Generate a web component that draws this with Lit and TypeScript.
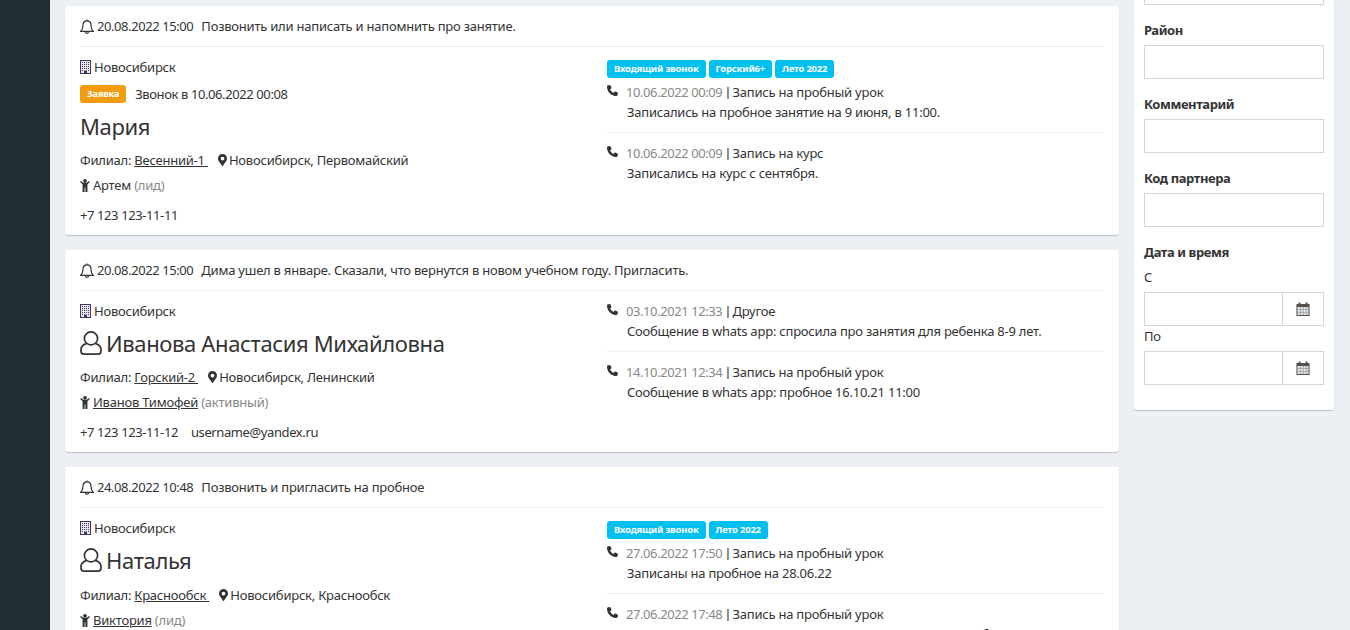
import { LitElement, html, css } from "lit";
import { customElement } from "lit/decorators.js";

const bell = html`<svg class="bell" viewBox="0 0 14 15" fill="none" stroke="currentColor" stroke-width="1.200"><path d="M7 1.800C4.600 1.800 3 3.700 3 6.200c0 3-.7 4.600-2.300 6.100h12.600C11.700 10.800 11 9.200 11 6.200c0-2.500-1.600-4.400-4-4.400z"/><path d="M7 .4v1.400M5.400 12.500c0 1 .7 1.800 1.600 1.800s1.600-.8 1.600-1.800"/></svg>`;
const building = html`<svg class="bld" viewBox="0 0 11 14"><path fill="#ece8f2" d="M0 0h11v14H0z"/><path fill-rule="evenodd" fill="#43365a" d="M0 0h11v14H0zM1 1v12h9V1z"/><path fill="#43365a" d="M2 2h1v1H2zM4 2h1v1H4zM6 2h1v1H6zM8 2h1v1H8zM2 4h1v1H2zM4 4h1v1H4zM6 4h1v1H6zM8 4h1v1H8zM2 6h1v1H2zM4 6h1v1H4zM6 6h1v1H6zM8 6h1v1H8zM2 8h1v1H2zM4 8h1v1H4zM6 8h1v1H6zM8 8h1v1H8zM2 10h1v1H2zM8 10h1v1H8zM4 10.500h3V14H4z"/></svg>`;
const pin = html`<svg class="ic pin" viewBox="0 0 384 512"><path d="M172.300 501.700C27 291 0 269.400 0 192 0 86 86 0 192 0s192 86 192 192c0 77.400-27 99-172.300 309.700-9.500 13.800-29.900 13.800-39.400 0zM192 272a80 80 0 1 0 0-160 80 80 0 0 0 0 160z"/></svg>`;
const child = html`<svg class="ic child" viewBox="0 0 12 16"><circle cx="6" cy="2.300" r="2.300"/><path d="M0 3.600 1 2.400l3 2.300h4l3-2.300 1 1.200-3 3V16H6.500v-5.500h-1V16H3V6.600z"/></svg>`;
const phone = html`<svg class="ic phone" viewBox="0 0 512 512"><path d="M164.900 24.600c-7.700-18.600-28-28.500-47.400-23.200l-88 24C12.100 30.200 0 46 0 64c0 247.400 200.600 448 448 448 18 0 33.800-12.100 38.600-29.500l24-88c5.300-19.400-4.600-39.700-23.200-47.400l-96-40c-16.300-6.800-35.200-2.100-46.300 11.600L304.700 368C234.300 334.700 177.300 277.700 144 207.300l49.300-40.400c13.700-11.200 18.400-30 11.600-46.300l-40-96z"/></svg>`;
const user = html`<svg class="user" viewBox="0 0 22 24" fill="none" stroke="currentColor" stroke-width="1.700"><ellipse cx="11" cy="7.400" rx="6.600" ry="6.500"/><path d="M6.500 12.600C3 13.600 1 15.800 1 18.800v1.200c0 1.900 1.300 3.100 3 3.100h14c1.700 0 3-1.200 3-3.100v-1.200c0-3-2-5.200-5.500-6.200"/></svg>`;
const cal = html`<svg class="calic" viewBox="0 0 14 14"><path fill="#dfe3ea" d="M.5 2h13v12H.5z"/><path fill="#55504c" d="M.5 2h2V.500h2V2h5V.500h2V2h2v3H.5zM.5 5h1v9h-1zM12.500 5h1v9h-1zM.5 13h13v1H.5z"/><path fill="#8a8a8a" d="M1 7.500h12v.6H1zM1 10.200h12v.6H1zM4 5h.6v8H4zM6.900 5h.6v8h-.6zM9.800 5h.6v8h-.6z"/></svg>`;

type Note = { date: string; type: string; text: string };
type Card = {
  reminder: string; remText: string; tags: string[]; claim?: string; name: string; icon: boolean;
  branch: string; loc: string; kid: string; kidLink: boolean; status: string; contacts: string[]; notes: Note[];
};

const cards: Card[] = [
  { reminder: "20.08.2022 15:00", remText: "Позвонить или написать и напомнить про занятие.",
    tags: ["Входящий звонок", "Горский6+", "Лето 2022"], claim: "Звонок в 10.06.2022 00:08", name: "Мария", icon: false,
    branch: "Весенний-1", loc: "Новосибирск, Первомайский", kid: "Артем", kidLink: false, status: "(лид)", contacts: ["+7 123 123-11-11"],
    notes: [
      { date: "10.06.2022 00:09", type: "Запись на пробный урок", text: "Записались на пробное занятие на 9 июня, в 11:00." },
      { date: "10.06.2022 00:09", type: "Запись на курс", text: "Записались на курс с сентября." },
    ] },
  { reminder: "20.08.2022 15:00", remText: "Дима ушел в январе. Сказали, что вернутся в новом учебном году. Пригласить.",
    tags: [], name: "Иванова Анастасия Михайловна", icon: true,
    branch: "Горский-2", loc: "Новосибирск, Ленинский", kid: "Иванов Тимофей", kidLink: true, status: "(активный)", contacts: ["+7 123 123-11-12", "username@yandex.ru"],
    notes: [
      { date: "03.10.2021 12:33", type: "Другое", text: "Сообщение в whats app: спросила про занятия для ребенка 8-9 лет." },
      { date: "14.10.2021 12:34", type: "Запись на пробный урок", text: "Сообщение в whats app: пробное 16.10.21 11:00" },
    ] },
  { reminder: "24.08.2022 10:48", remText: "Позвонить и пригласить на пробное",
    tags: ["Входящий звонок", "Лето 2022"], name: "Наталья", icon: true,
    branch: "Краснообск", loc: "Новосибирск, Краснообск", kid: "Виктория", kidLink: true, status: "(лид)", contacts: [],
    notes: [
      { date: "27.06.2022 17:50", type: "Запись на пробный урок", text: "Записаны на пробное на 28.06.22" },
      { date: "27.06.2022 17:48", type: "Запись на пробный урок", text: "Записаны на занятие 27.06.22 в 16:00, подтвердили, на работе" },
    ] },
];

@customElement("app-root")
export class AppRoot extends LitElement {
  static styles = css`
    :host { display: block; height: 630px; overflow: hidden; background: #ecf0f5; font: 13px/20px "Noto Sans", sans-serif; color: #333; letter-spacing: -0.23px; }
    .page { display: flex; height: 630px; overflow: hidden; }
    .side { width: 50px; background: #222d32; flex: none; }
    .main { width: 1054px; margin-left: 15px; padding-top: 6px; flex: none; }
    .card { background: #fff; border-radius: 3px; box-shadow: 0 1px 1px rgba(0,0,0,.2); padding: 10px 15px 10px; margin-bottom: 15px; }
    .card:nth-child(3) h3 { margin-bottom: 11px; }
    .rem { display: flex; align-items: center; height: 20px; padding-bottom: 10px; border-bottom: 1px solid #eee; margin-bottom: 10px; }
    .rem .when { margin: 0 8px 0 3px; letter-spacing: -0.42px; }
    .cols { display: flex; }
    .left { width: 527px; flex: none; }
    .right { flex: 1; }
    .ic { fill: currentColor; flex: none; display: inline-block; vertical-align: -2px; }
    .bell { width: 14px; height: 15px; flex: none; }
    .bld { width: 11px; height: 14px; margin-right: 3px; display: inline-block; vertical-align: -2px; }
    .pin { width: 9px; height: 12px; margin-right: 2px; vertical-align: -1px; }
    .child { width: 10px; height: 13px; margin-right: 3px; }
    .phone { width: 11px; height: 11px; position: relative; top: -2px; }
    .city { height: 20px; margin-bottom: 7px; }
    .claimrow { display: flex; align-items: center; height: 20px; margin-bottom: 7px; letter-spacing: -0.4px; }
    .lbl { background: #f39c12; color: #fff; font-size: 9.500px; font-weight: 700; line-height: 18px; padding: 0 7px; border-radius: 3px; margin-right: 9px; letter-spacing: -0.3px; }
    h3 { font-size: 22px; font-weight: 400; line-height: 26px; margin: 8px 0 10px; height: 28px; display: flex; align-items: center; gap: 4px; letter-spacing: -0.36px; }
    .user { width: 22px; height: 24px; flex: none; }
    .line { height: 20px; margin-bottom: 5px; }
    a { color: #333; text-decoration: underline; }
    .mut { color: #888; }
    .gap { margin-left: 10px; }
    .cts { margin-top: 10px; display: flex; gap: 13px; height: 20px; letter-spacing: -0.4px; }
    .tags { display: flex; gap: 3px; height: 18px; margin-top: 3px; margin-bottom: 4px; }
    .tag { background: #00c0ef; color: #fff; font-size: 9.500px; font-weight: 700; line-height: 18px; padding: 0 7px; border-radius: 3px; letter-spacing: -0.22px; }
    .note { padding-bottom: 10px; }
    .note + .note { border-top: 1px solid #eee; padding-top: 10px; }
    .nh { display: flex; align-items: center; height: 20px; }
    .nh .d { color: #888; margin-left: 8px; letter-spacing: -0.42px; }
    .nh .sep { font-family: "Liberation Sans", sans-serif; margin: 0 3px 0 4px; }
    .nb { padding-left: 20px; height: 20px; white-space: nowrap; }
    .filter { width: 200px; margin-left: 15px; flex: none; background: #fff; border-radius: 3px; box-shadow: 0 1px 1px rgba(0,0,0,.2); height: 410px; padding: 0 10px; box-sizing: border-box; }
    .f0 { height: 5px; border: 1px solid #d2d6de; border-top: none; box-sizing: border-box; margin-bottom: 15px; }
    .fl { font-weight: 700; height: 20px; margin-bottom: 5px; letter-spacing: -0.42px; }
    .inp { height: 34px; border: 1px solid #d2d6de; box-sizing: border-box; margin-bottom: 15px; }
    .sub { height: 20px; margin-bottom: 5px; }
    .grp { display: flex; height: 34px; border: 1px solid #d2d6de; box-sizing: border-box; }
    .grp div { flex: 1; }
    .grp span { width: 40px; border-left: 1px solid #d2d6de; display: flex; align-items: center; justify-content: center; }
    .calic { width: 14px; height: 14px; }
    .sub2 { height: 20px; margin-top: 0; margin-bottom: 5px; }
  `;

  card(c: Card) {
    return html`<div class="card">
      <div class="rem">${bell}<span class="when">${c.reminder}</span><span>${c.remText}</span></div>
      <div class="cols">
        <div class="left">
          <div class="city">${building}Новосибирск</div>
          ${c.claim ? html`<div class="claimrow"><span class="lbl">Заявка</span>${c.claim}</div>` : ""}
          <h3>${c.icon ? user : ""}${c.name}</h3>
          <div class="line">Филиал: <a href="#">${c.branch} </a><span class="gap">${pin}${c.loc}</span></div>
          <div class="line">${child}${c.kidLink ? html`<a href="#">${c.kid}</a>` : c.kid} <span class="mut">${c.status}</span></div>
          ${c.contacts.length ? html`<div class="cts">${c.contacts.map((x) => html`<span>${x}</span>`)}</div>` : ""}
        </div>
        <div class="right">
          ${c.tags.length ? html`<div class="tags">${c.tags.map((t) => html`<span class="tag">${t}</span>`)}</div>` : ""}
          ${c.notes.map((n) => html`<div class="note">
            <div class="nh">${phone}<span class="d">${n.date}</span><span class="sep">|</span><span>${n.type}</span></div>
            <div class="nb">${n.text}</div>
          </div>`)}
        </div>
      </div>
    </div>`;
  }

  render() {
    return html`<div class="page">
      <div class="side"></div>
      <div class="main">${cards.map((c) => this.card(c))}</div>
      <div class="filter">
        <div class="f0"></div>
        <div class="fl">Район</div><div class="inp"></div>
        <div class="fl">Комментарий</div><div class="inp"></div>
        <div class="fl">Код партнера</div><div class="inp"></div>
        <div class="fl">Дата и время</div>
        <div class="sub">С</div>
        <div class="grp"><div></div><span>${cal}</span></div>
        <div class="sub2">По</div>
        <div class="grp"><div></div><span>${cal}</span></div>
      </div>
    </div>`;
  }
}
